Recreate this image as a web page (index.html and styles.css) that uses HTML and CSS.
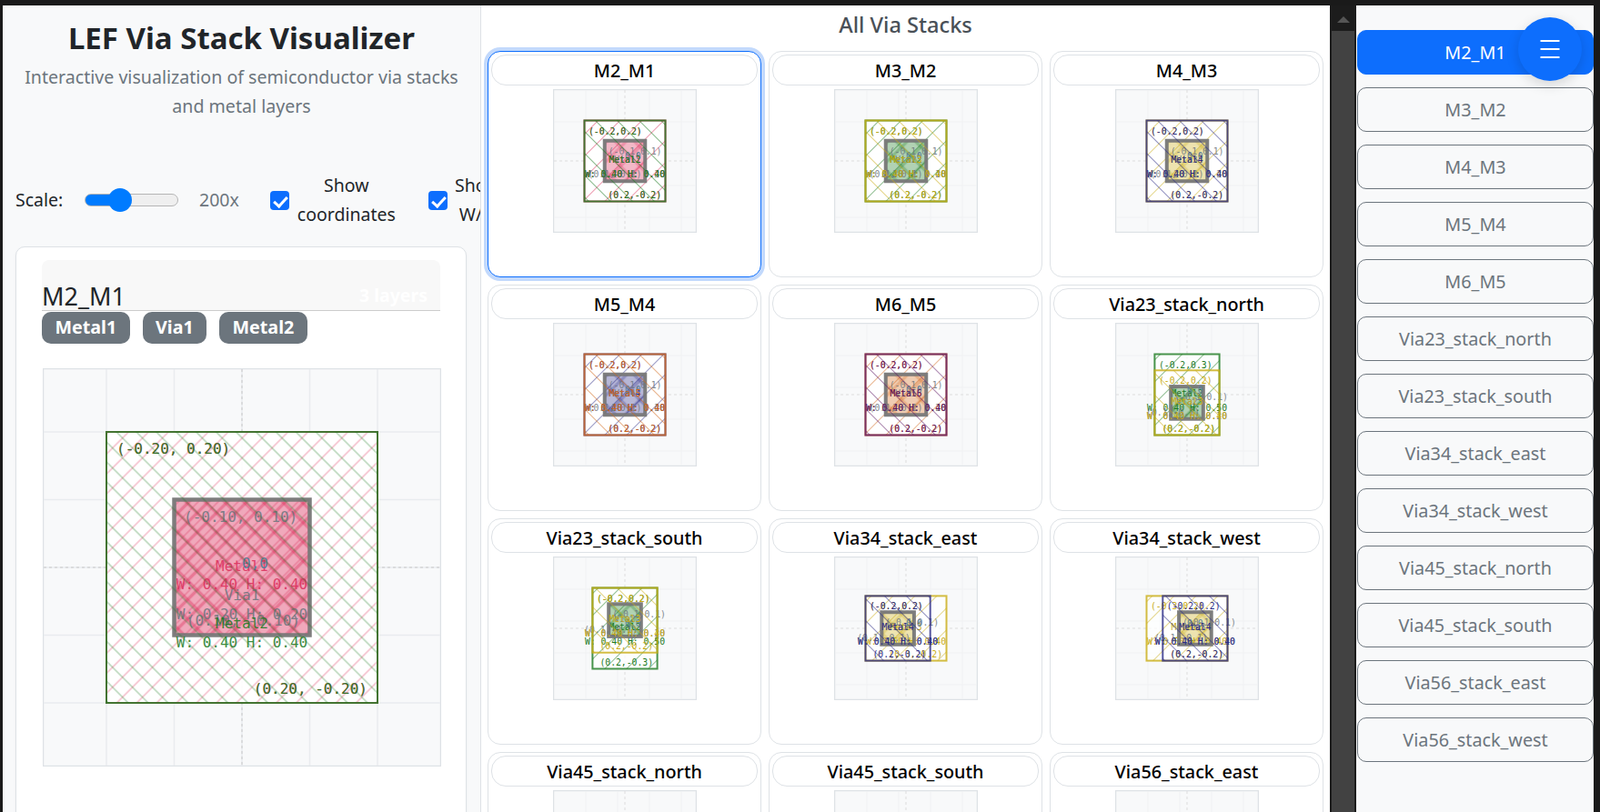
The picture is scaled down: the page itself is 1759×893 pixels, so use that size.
FILE: index.html
```html
<!DOCTYPE html>
<html lang="en">
<head>
    <meta charset="UTF-8">
    <meta name="viewport" content="width=device-width, initial-scale=1.0">
    <title>LEF Via Stack Visualizer</title>
    <link rel="stylesheet" href="styles.css">
</head>
<body>
    <div class="app">
        <section class="left-panel">
            <header class="page-header">
                <h1>LEF Via Stack Visualizer</h1>
                <p>Interactive visualization of semiconductor via stacks and metal layers</p>
            </header>

            <div class="controls">
                <label class="scale-label" for="scaleRange">Scale:</label>
                <input class="scale-range" id="scaleRange" type="range" min="50" max="500" value="200">
                <span class="scale-value">200x</span>
                <input class="check check-first" type="checkbox" checked>
                <span class="check-label">Show coordinates</span>
                <input class="check check-second" type="checkbox" checked>
                <span class="check-label check-label-wh">Show W/H</span>
            </div>

            <div class="detail-card">
                <div class="detail-header">
                    <h2>M2_M1</h2>
                    <span class="layer-count">3 layers</span>
                </div>
                <div class="badges">
                    <span class="badge">Metal1</span>
                    <span class="badge">Via1</span>
                    <span class="badge">Metal2</span>
                </div>
                <div class="detail-view" id="detailView"></div>
            </div>
        </section>

        <main class="center-panel">
            <h3>All Via Stacks</h3>
            <div class="stack-grid" id="stackGrid"></div>
        </main>

        <div class="scrollbar">
            <div class="scroll-arrow"></div>
            <div class="scroll-thumb"></div>
        </div>

        <nav class="sidebar" id="sidebar"></nav>
    </div>

    <button class="menu-button" aria-label="Menu">
        <svg width="22" height="22" viewBox="0 0 22 22">
            <path d="M0.5 2h21M0.5 11h21M0.5 20h21" stroke="#fff" stroke-width="2" fill="none"/>
        </svg>
    </button>

    <script src="script.js"></script>
</body>
</html>
```

FILE: styles.css
```css
* {
    box-sizing: border-box;
}

html, body {
    height: 100%;
}

body {
    margin: 0;
    overflow: hidden;
    background-color: #1a1a1a;
    font-family: "Noto Sans", "Open Sans", sans-serif;
    color: #212529;
}

.app {
    display: flex;
    height: 887px;
    margin-top: 6px;
    margin-left: 3px;
    width: 1749px;
}

/* left column */
.left-panel {
    flex: 0 0 526px;
    overflow: hidden;
    background-color: #f8f9fa;
    border-right: 1px solid #dee2e6;
}

.page-header {
    padding: 13px 15px 0;
    text-align: center;
}

.page-header h1 {
    margin: 0;
    font-size: 33px;
    line-height: 46px;
    font-weight: 700;
}

.page-header p {
    margin: 3.5px 0 0;
    font-size: 19.6px;
    line-height: 32.5px;
    color: #6c757d;
}

.controls {
    display: flex;
    align-items: center;
    height: 66px;
    margin-top: 53.5px;
    padding-left: 14px;
    font-size: 19.5px;
    line-height: 32.5px;
    white-space: nowrap;
}

.scale-label {
    flex: 0 0 54px;
}

.scale-range {
    flex: 0 0 103px;
    width: 103px;
    height: 26px;
    margin: 0 0 0 22px;
    appearance: none;
    background: transparent;
}

.scale-range::-webkit-slider-runnable-track {
    height: 14px;
    border: 1px solid #b5b5b5;
    border-radius: 7px;
    background: linear-gradient(to right, #007bff 37%, #efefef 37%);
}

.scale-range::-webkit-slider-thumb {
    appearance: none;
    width: 26px;
    height: 26px;
    margin-top: -7px;
    border-radius: 50%;
    background-color: #007bff;
}

.scale-value {
    flex: 0 0 42px;
    margin-left: 23px;
    color: #6c757d;
}

.check {
    position: relative;
    flex: 0 0 21px;
    height: 21px;
    margin: 0;
    appearance: none;
    border-radius: 4px;
    background-color: #0d6efd;
}

.check::after {
    content: "";
    position: absolute;
    left: 7px;
    top: 3px;
    width: 6px;
    height: 12px;
    border: solid #fff;
    border-width: 0 3px 3px 0;
    transform: rotate(42deg);
}

.check-first {
    margin-left: 34px;
}

.check-second {
    margin-left: 32px;
}

.check-label {
    flex: 0 0 116px;
    margin-left: 5px;
    text-align: center;
    white-space: normal;
}

.check-label-wh {
    flex: 0 0 52px;
    margin-left: 7px;
}

.detail-card {
    width: 496px;
    height: 640px;
    margin: 17.5px 0 0 14px;
    padding: 14px 28px;
    background-color: #fff;
    border: 1px solid #dee2e6;
    border-radius: 10px;
    box-shadow: 0 1px 3px rgba(0, 0, 0, 0.05);
}

.detail-header {
    display: flex;
    justify-content: space-between;
    align-items: flex-end;
    height: 56px;
    padding-right: 14px;
    background-color: #f8f8f8;
    border-bottom: 1px solid #ccc;
    border-radius: 8px 8px 0 0;
}

.detail-header h2 {
    margin: 0;
    font-size: 27px;
    line-height: 30px;
    font-weight: 400;
}

.layer-count {
    font-size: 19.5px;
    line-height: 32px;
    font-weight: 700;
    color: #fff;
}

.badges {
    display: flex;
    gap: 14px;
    margin-top: 1px;
}

.badge {
    height: 35px;
    padding: 0 14.4px;
    border-radius: 10px;
    background-color: #6c757d;
    color: #fff;
    font-size: 19.7px;
    line-height: 34px;
    font-weight: 700;
}

.detail-view {
    margin: 27.5px 0 0 0.5px;
}

.detail-view svg, .mini-view svg {
    display: block;
}

.stack-svg text {
    font-family: "DejaVu Sans Mono", monospace;
}

/* center column */
.center-panel {
    flex: 0 0 933px;
    overflow: hidden;
    padding: 0 7px;
    background-color: #fff;
}

.center-panel h3 {
    margin: 0;
    height: 50px;
    text-align: center;
    font-size: 23.6px;
    line-height: 42px;
    font-weight: 500;
    color: #495057;
}

.stack-grid {
    display: grid;
    grid-template-columns: repeat(3, 301px);
    grid-auto-rows: 249px;
    gap: 8px;
}

.stack-card {
    padding: 3px;
    border: 1px solid #dee2e6;
    border-radius: 14px;
    background-color: #fff;
}

.stack-card.selected {
    border-color: #0d6efd;
    box-shadow: 0 0 0 4px #c2d9fc;
}

.stack-title {
    height: 34px;
    border: 1px solid #dee2e6;
    border-radius: 16px;
    text-align: center;
    font-size: 19.8px;
    line-height: 33px;
    font-weight: 500;
    color: #000;
}

.mini-view {
    display: flex;
    justify-content: center;
    margin-top: 4px;
}

/* fake browser scrollbar */
.scrollbar {
    flex: 0 0 29px;
    display: flex;
    flex-direction: column;
    align-items: center;
    background-color: #1c1c1c;
}

.scroll-arrow {
    margin-top: 12px;
    border-left: 7px solid transparent;
    border-right: 7px solid transparent;
    border-bottom: 7px solid #555;
}

.scroll-thumb {
    width: 25px;
    flex: 1;
    margin-top: 9px;
    background-color: #424242;
}

/* right column */
.sidebar {
    flex: 0 0 261px;
    display: flex;
    flex-direction: column;
    gap: 14px;
    padding: 27px 0 0 1px;
    background-color: #f8f9fa;
}

.side-button {
    height: 49px;
    padding: 0;
    border: 1px solid #6c757d;
    border-radius: 10px;
    background: transparent;
    font-family: inherit;
    font-size: 19.8px;
    color: #6c757d;
}

.side-button.active {
    background-color: #0d6efd;
    border-color: #0d6efd;
    color: #fff;
}

.menu-button {
    position: fixed;
    left: 1669px;
    top: 19px;
    display: flex;
    align-items: center;
    justify-content: center;
    width: 70px;
    height: 70px;
    padding: 0;
    border: none;
    border-radius: 50%;
    background-color: #0d6efd;
    box-shadow: 0 4px 14px rgba(0, 0, 0, 0.15);
}
```

FILE: script.js
```js
const metals = {
    Metal1: "#dc2f5c",
    Metal2: "#1b7a1f",
    Metal3: "#c9ac14",
    Metal4: "#2b2b86",
    Metal5: "#d2691e",
    Metal6: "#5f1a66"
};

const square = [-0.2, -0.2, 0.2, 0.2];

// each stack: lower metal, via, upper metal; rects are x1, y1, x2, y2 in microns
function stack(name, lower, via, upper, lowerRect, upperRect) {
    return {
        name: name,
        lower: { name: lower, rect: lowerRect || square },
        via: via,
        upper: { name: upper, rect: upperRect || square }
    };
}

const stacks = [
    stack("M2_M1", "Metal1", "Via1", "Metal2"),
    stack("M3_M2", "Metal2", "Via2", "Metal3"),
    stack("M4_M3", "Metal3", "Via3", "Metal4"),
    stack("M5_M4", "Metal4", "Via4", "Metal5"),
    stack("M6_M5", "Metal5", "Via5", "Metal6"),
    stack("Via23_stack_north", "Metal2", "Via2", "Metal3", [-0.2, -0.2, 0.2, 0.3]),
    stack("Via23_stack_south", "Metal2", "Via2", "Metal3", [-0.2, -0.3, 0.2, 0.2]),
    stack("Via34_stack_east", "Metal3", "Via3", "Metal4", [-0.2, -0.2, 0.3, 0.2]),
    stack("Via34_stack_west", "Metal3", "Via3", "Metal4", [-0.3, -0.2, 0.2, 0.2]),
    stack("Via45_stack_north", "Metal4", "Via4", "Metal5", [-0.2, -0.2, 0.2, 0.3]),
    stack("Via45_stack_south", "Metal4", "Via4", "Metal5", [-0.2, -0.3, 0.2, 0.2]),
    stack("Via56_stack_east", "Metal5", "Via5", "Metal6", [-0.2, -0.2, 0.3, 0.2]),
    stack("Via56_stack_west", "Metal5", "Via5", "Metal6", [-0.3, -0.2, 0.2, 0.2])
];

const miniOptions = {
    size: 158, extent: 89, font: 9.75, gridStart: 36, gridStep: 35, gridColor: "#f0f1f3", gridWidth: 1,
    hatchPitch: 17, hatchWidth: 1, hatchOpacity: 0.5, viaTint: 0.34, viaHatch: 0.28, dashColor: "#ddd",
    metalStroke: 2, viaStroke: 4, inset: 4.5, topDy: 15, bottomDy: 3.5,
    digits: 1, comma: ",", names: [[2, 18], [2, 18], [2, 18]], originDy: -2, labelOpacity: 1
};

const detailOptions = {
    size: 438, extent: 298, font: 16, gridStart: 70, gridStep: 74.5, gridColor: "#e9ecef", gridWidth: 1.5,
    hatchPitch: 15.5, hatchWidth: 1.5, hatchOpacity: 0.33, viaTint: 0.42, viaHatch: 0.4, dashColor: "#c8c8c8",
    metalStroke: 2, viaStroke: 4.5, inset: 11, topDy: 24, bottomDy: 10,
    digits: 2, comma: ", ", names: [[4, 24], [36, 57], [67, 88]], originDy: 1, labelOpacity: 0.85
};

let patternCount = 0;

function hatch(defs, color, angle, pitch, width, opacity) {
    patternCount += 1;
    const id = "hatch" + patternCount;
    defs.push('<pattern id="' + id + '" width="' + pitch + '" height="' + pitch + '" patternUnits="userSpaceOnUse" patternTransform="rotate(' + angle + ')">' +
        '<line x1="' + pitch / 2 + '" y1="0" x2="' + pitch / 2 + '" y2="' + pitch + '" stroke="' + color + '" stroke-width="' + width + '" stroke-opacity="' + opacity + '"/>' +
        '</pattern>');
    return "url(#" + id + ")";
}

function label(text, x, y, color, size, anchor) {
    return '<text x="' + x + '" y="' + y + '" fill="' + color + '" font-size="' + size + '" text-anchor="' + (anchor || "start") + '">' + text + '</text>';
}

function coord(x, y, o) {
    return "(" + x.toFixed(o.digits) + o.comma + y.toFixed(o.digits) + ")";
}

function renderStack(item, o) {
    const rects = [item.lower.rect, item.upper.rect];
    const minX = Math.min(rects[0][0], rects[1][0]);
    const maxX = Math.max(rects[0][2], rects[1][2]);
    const minY = Math.min(rects[0][1], rects[1][1]);
    const maxY = Math.max(rects[0][3], rects[1][3]);
    const scale = o.extent / Math.max(maxX - minX, maxY - minY);
    const cx = o.size / 2 - scale * (minX + maxX) / 2;
    const cy = o.size / 2 + scale * (minY + maxY) / 2;
    const defs = [];
    let out = "";

    // background grid
    out += '<rect x="0.5" y="0.5" width="' + (o.size - 1) + '" height="' + (o.size - 1) + '" fill="#f8f9fa" stroke="#dee2e6" stroke-width="1.5"/>';
    for (let g = o.gridStart; g < o.size; g += o.gridStep) {
        out += '<path d="M' + g + ' 1V' + (o.size - 1) + 'M1 ' + g + 'H' + (o.size - 1) + '" stroke="' + o.gridColor + '" stroke-width="' + o.gridWidth + '"/>';
    }
    const mid = o.size / 2;
    out += '<path d="M' + mid + ' 1V' + (o.size - 1) + 'M1 ' + mid + 'H' + (o.size - 1) + '" stroke="' + o.dashColor + '" stroke-width="1" stroke-dasharray="3 3"/>';

    function box(r) {
        return 'x="' + (cx + r[0] * scale) + '" y="' + (cy - r[3] * scale) + '" width="' + ((r[2] - r[0]) * scale) + '" height="' + ((r[3] - r[1]) * scale) + '"';
    }

    function drawLabels(name, color, r, index, inset, topDy, bottomDy) {
        const x = cx + r[0] * scale;
        const right = cx + r[2] * scale;
        const top = cy - r[3] * scale;
        const bottom = cy - r[1] * scale;
        const middleX = (x + right) / 2;
        const middleY = (top + bottom) / 2;
        const w = (r[2] - r[0]).toFixed(2);
        const h = (r[3] - r[1]).toFixed(2);
        let s = "";
        s += label(coord(r[0], r[3], o), x + inset, top + topDy, color, o.font);
        s += label(coord(r[2], r[1], o), right - inset, bottom - bottomDy, color, o.font, "end");
        s += label(name, middleX, middleY + o.names[index][0], color, o.font, "middle");
        s += label("W: " + w + " H: " + h, middleX, middleY + o.names[index][1], color, o.font, "middle");
        return s;
    }

    function drawMetal(metal, angle, index) {
        const color = metals[metal.name];
        const fill = hatch(defs, color, angle, o.hatchPitch, o.hatchWidth, o.hatchOpacity);
        return '<rect ' + box(metal.rect) + ' fill="' + fill + '" stroke="' + color + '" stroke-width="' + o.metalStroke + '" stroke-opacity="0.8"/>' +
            '<g opacity="' + o.labelOpacity + '">' + drawLabels(metal.name, color, metal.rect, index, o.inset, o.topDy, o.bottomDy) + '</g>';
    }

    // pale wash under both metals so the grid only just shows through
    out += '<rect ' + box(item.lower.rect) + ' fill="#fff" fill-opacity="0.75"/>';
    out += '<rect ' + box(item.upper.rect) + ' fill="#fff" fill-opacity="0.75"/>';
    out += drawMetal(item.lower, 45, 0);

    // via sits in the middle, tinted by the lower metal
    const tint = metals[item.lower.name];
    const viaRect = [-0.1, -0.1, 0.1, 0.1];
    const viaA = hatch(defs, tint, 45, 15, 3.5, o.viaHatch);
    const viaB = hatch(defs, tint, -45, 15, 3.5, o.viaHatch);
    out += '<rect ' + box(viaRect) + ' fill="' + tint + '" fill-opacity="' + o.viaTint + '"/>';
    out += '<rect ' + box(viaRect) + ' fill="' + viaA + '"/>';
    out += '<rect ' + box(viaRect) + ' fill="' + viaB + '" stroke="#777" stroke-width="' + o.viaStroke + '" stroke-opacity="0.95"/>';
    out += '<g opacity="0.85">' + drawLabels(item.via, "#6c757d", viaRect, 1, o.inset - 0.5, o.topDy, o.bottomDy + 0.5) + '</g>';
    out += label("0,0", mid, mid + o.originDy, "#5a7f9a", o.font);

    out += drawMetal(item.upper, -45, 2);

    return '<svg class="stack-svg" width="' + o.size + '" height="' + o.size + '" viewBox="0 0 ' + o.size + ' ' + o.size + '"><defs>' + defs.join("") + '</defs>' + out + '</svg>';
}

function buildPage() {
    let cards = "";
    let buttons = "";
    stacks.forEach(function (item, i) {
        cards += '<div class="stack-card' + (i === 0 ? " selected" : "") + '"><div class="stack-title">' + item.name + '</div><div class="mini-view">' + renderStack(item, miniOptions) + '</div></div>';
        buttons += '<button class="side-button' + (i === 0 ? " active" : "") + '">' + item.name + '</button>';
    });
    document.getElementById("stackGrid").innerHTML = cards;
    document.getElementById("sidebar").innerHTML = buttons;
    document.getElementById("detailView").innerHTML = renderStack(stacks[0], detailOptions);
}

buildPage();
```
